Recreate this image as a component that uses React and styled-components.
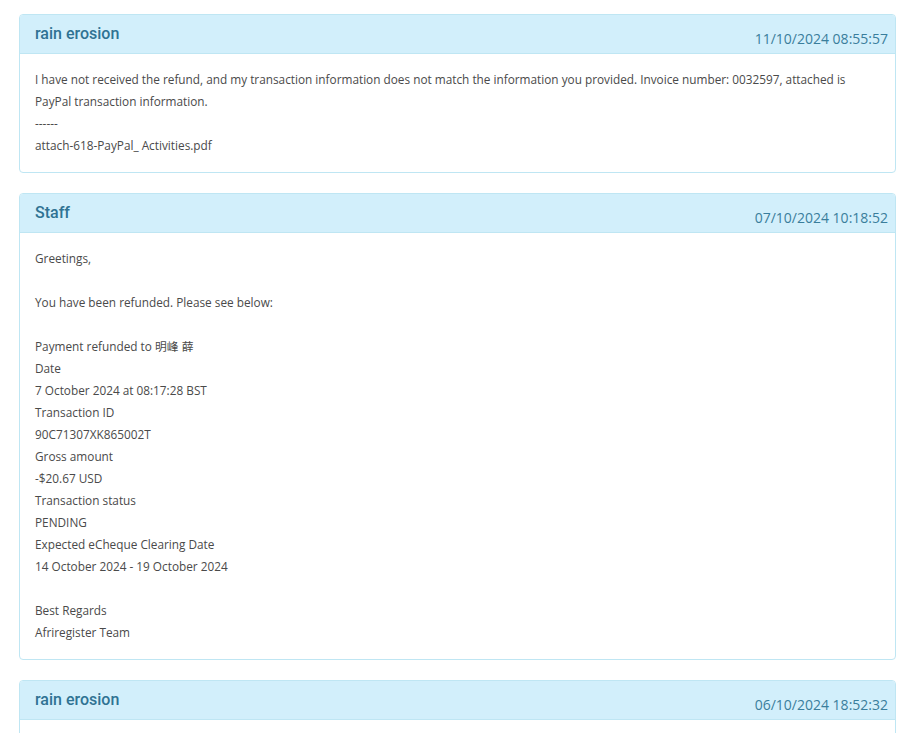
import React from "react";
import styled, { createGlobalStyle } from "styled-components";

const Global = createGlobalStyle`
  html, body { margin: 0; padding: 0; background: #fff; }
  body { font-family: "Open Sans", "Noto Sans", "Noto Sans CJK SC", sans-serif; }
`;

const Page = styled.div`
  padding: 14px 5px 0 19px;
  display: flex;
  flex-direction: column;
  gap: 20px;
`;

const Panel = styled.section`
  border: 1px solid #bfe6f3;
  border-radius: 4px;
  background: #fff;
  overflow: hidden;
`;

const Header = styled.header`
  display: flex;
  justify-content: space-between;
  align-items: flex-end;
  padding: 8px 7px 4px 15px;
  background: #d2effb;
  border-bottom: 1px solid #bfe6f3;
`;

const Author = styled.h3`
  margin: 0 0 4px 0;
  font-family: Roboto, "Noto Sans", sans-serif;
  font-weight: 500;
  font-size: 16px;
  line-height: 22px;
  color: #2f7393;
`;

const Stamp = styled.span`
  font-size: 14px;
  line-height: 20px;
  color: #3a7e9c;
`;

const Body = styled.div`
  padding: 14px 15px 16px;
  font-size: 11.8px;
  line-height: 22px;
  color: #4a4a4a;
  white-space: pre-line;
`;

const messages = [
  {
    author: "rain erosion",
    date: "11/10/2024 08:55:57",
    text:
      "I have not received the refund, and my transaction information does not match the information you provided. Invoice number: 0032597, attached is PayPal transaction information.\n------\nattach-618-PayPal_ Activities.pdf",
  },
  {
    author: "Staff",
    date: "07/10/2024 10:18:52",
    text:
      "Greetings,\n\nYou have been refunded. Please see below:\n\nPayment refunded to 明峰 薛\nDate\n7 October 2024 at 08:17:28 BST\nTransaction ID\n90C71307XK865002T\nGross amount\n-$20.67 USD\nTransaction status\nPENDING\nExpected eCheque Clearing Date\n14 October 2024 - 19 October 2024\n\nBest Regards\nAfriregister Team",
  },
  {
    author: "rain erosion",
    date: "06/10/2024 18:52:32",
    text:
      "Hello, I would like to request a refund for my order. Please let me know when it will be processed.\n------\nThank you",
  },
];

export default function App() {
  return (
    <>
      <Global />
      <Page>
        {messages.map((m, i) => (
          <Panel key={i}>
            <Header>
              <Author>{m.author}</Author>
              <Stamp>{m.date}</Stamp>
            </Header>
            <Body>{m.text}</Body>
          </Panel>
        ))}
      </Page>
    </>
  );
}
